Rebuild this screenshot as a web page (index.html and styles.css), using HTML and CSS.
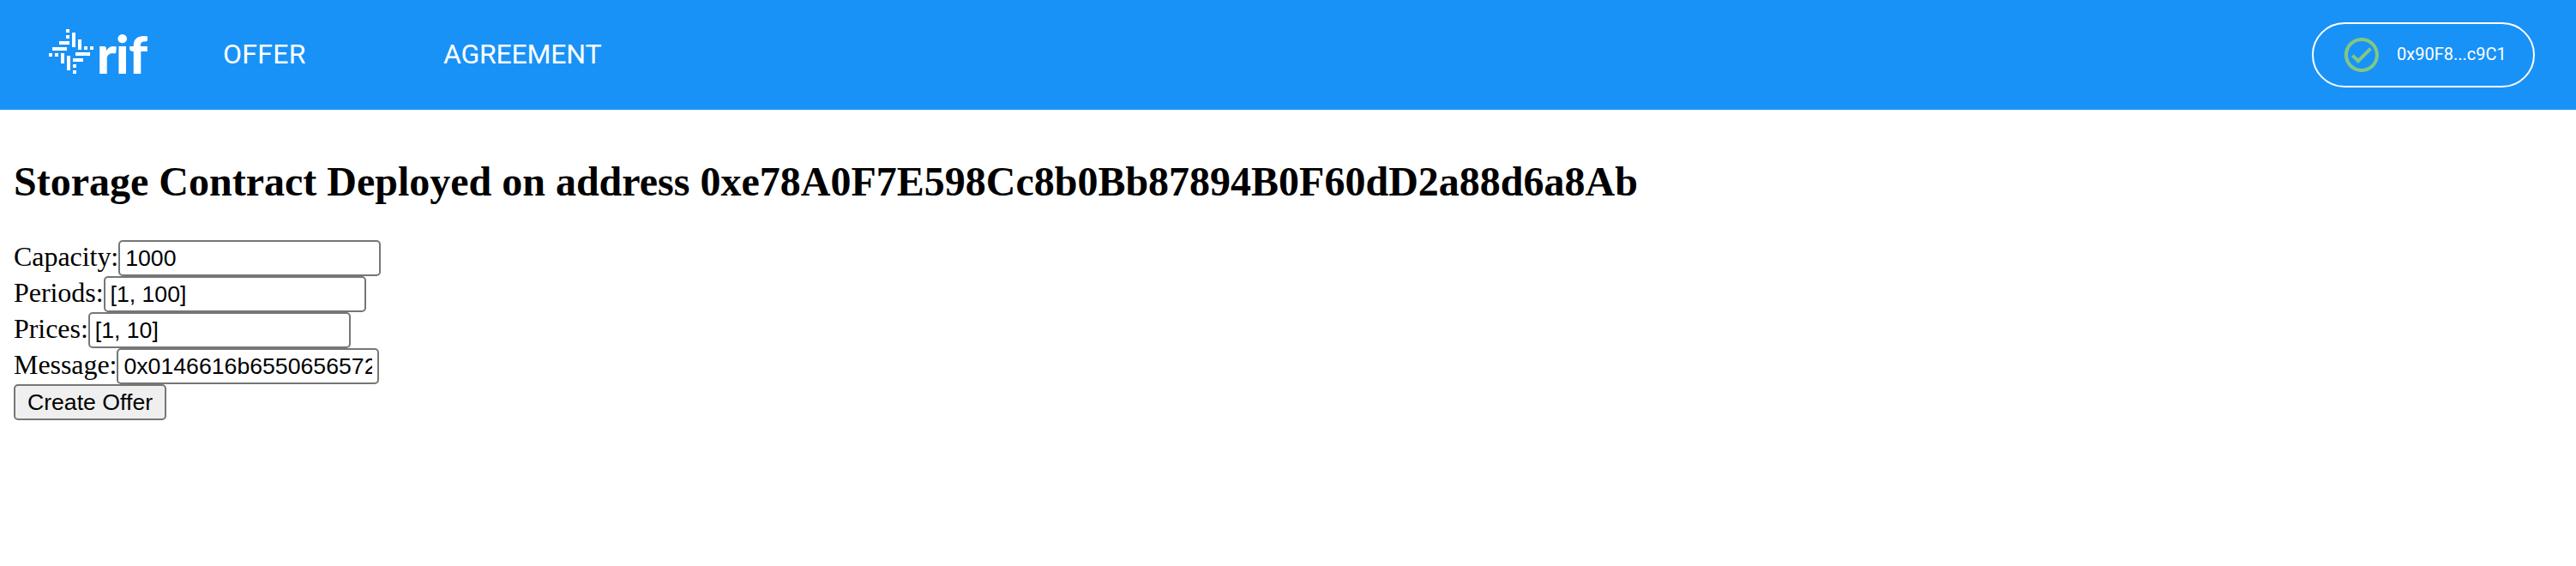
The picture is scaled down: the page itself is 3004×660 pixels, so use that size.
FILE: index.html
```html
<!DOCTYPE html>
<html lang="en">
<head>
<meta charset="utf-8">
<title>RIF Storage</title>
<link rel="stylesheet" href="styles.css">
</head>
<body>
<header class="header">
  <a class="logo">
    <svg class="logo-svg" viewBox="0 0 450 240" fill="#fff">
      <rect x="111" y="42" width="12" height="12"/><rect x="111" y="63" width="12" height="12"/>
      <rect x="132" y="54" width="12" height="51"/><rect x="153" y="78" width="12" height="36"/>
      <rect x="174" y="102" width="12" height="12"/><rect x="195" y="102" width="12" height="12"/>
      <rect x="87" y="84" width="36" height="12"/><rect x="63" y="105" width="51" height="12"/>
      <rect x="51" y="126" width="12" height="12"/><rect x="72" y="126" width="12" height="12"/>
      <rect x="93" y="126" width="12" height="36"/><rect x="114" y="135" width="12" height="51"/>
      <rect x="144" y="123" width="51" height="12"/><rect x="135" y="144" width="36" height="12"/>
      <rect x="135" y="165" width="12" height="12"/><rect x="135" y="186" width="12" height="12"/>
      <text class="wordmark" x="218 284 330" y="198">rif</text>
    </svg>
  </a>
  <nav class="nav">
    <a class="nav-link nav-offer">OFFER</a>
    <a class="nav-link nav-agreement">AGREEMENT</a>
  </nav>
  <div class="account">
    <svg class="check" viewBox="0 0 24 24"><path fill="#81c784" d="M16.59 7.58L10 14.17l-2.59-2.58L6 13l4 4 8-8zM12 2C6.48 2 2 6.48 2 12s4.48 10 10 10 10-4.48 10-10S17.52 2 12 2zm0 18c-4.42 0-8-3.58-8-8s3.58-8 8-8 8 3.58 8 8-3.58 8-8 8z"/></svg>
    <span class="address">0x90F8...c9C1</span>
  </div>
</header>
<main class="main">
  <h2 class="title">Storage Contract Deployed on address 0xe78A0F7E598Cc8b0Bb87894B0F60dD2a88d6a8Ab</h2>
  <form class="form">
    <label class="row"><span class="label">Capacity:</span><input class="field" value="1000"></label>
    <label class="row"><span class="label">Periods:</span><input class="field" value="[1, 100]"></label>
    <label class="row"><span class="label">Prices:</span><input class="field" value="[1, 10]"></label>
    <label class="row"><span class="label">Message:</span><input class="field" value="0x0146616b6550656572"></label>
    <button class="submit" type="button">Create Offer</button>
  </form>
</main>
</body>
</html>
```
FILE: styles.css
```css
* { box-sizing: border-box; }
body {
  margin: 0;
  background: #fff;
  color: #000;
  font-family: "Liberation Serif", serif;
  font-size: 32px;
}
.header {
  display: flex;
  align-items: center;
  height: 128px;
  padding: 0 48px 0 40px;
  background: #1992f7;
  color: #fff;
  font-family: Roboto, sans-serif;
}
.logo { display: flex; width: 150px; height: 80px; margin-top: -8px; }
.logo-svg { width: 150px; height: 80px; }
.wordmark { font-family: Lato, sans-serif; font-weight: 900; font-size: 184px; }
.nav { display: flex; margin-left: 70px; padding-bottom: 2px; }
.nav-link { font-size: 32px; line-height: 40px; white-space: nowrap; }
.nav-offer { width: 257px; letter-spacing: 0.3px; }
.nav-agreement { letter-spacing: -0.2px; }
.account {
  display: flex;
  align-items: center;
  width: 260px;
  height: 76px;
  margin-left: auto;
  padding-left: 32px;
  border: 2px solid #fff;
  border-radius: 38px;
}
.check { width: 48px; height: 48px; }
.address { margin-left: 17px; padding-bottom: 2px; font-size: 20px; line-height: 28px; }
.main { padding: 0 16px; }
.title { margin: 56px 0 40px; font-size: 48px; line-height: 56px; font-weight: 700; white-space: nowrap; }
.form { display: flex; flex-direction: column; align-items: flex-start; }
.row { display: flex; align-items: center; height: 42px; }
.label { height: 42px; line-height: 39px; letter-spacing: -0.05px; }
.field {
  width: 306px;
  height: 42px;
  padding: 0 6px;
  border: 2px solid #767676;
  border-radius: 5px;
  background: #fff;
  color: #000;
  font: 26.67px "Liberation Sans", sans-serif;
}
.submit {
  width: 178px;
  height: 42px;
  padding: 0;
  border: 2px solid #767676;
  border-radius: 5px;
  background: #efefef;
  color: #000;
  font: 26.67px "Liberation Sans", sans-serif;
}
```
